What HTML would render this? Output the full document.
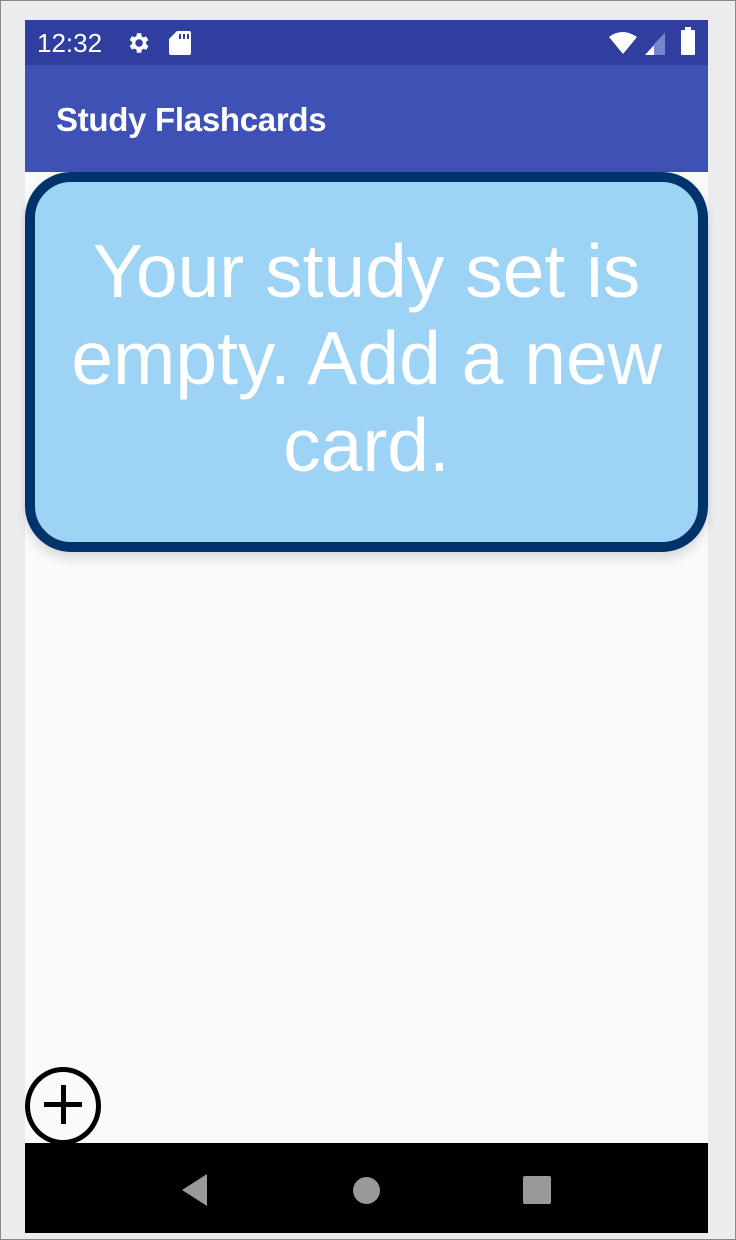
<!DOCTYPE html>
<html><head><style>
body{margin:0;width:736px;height:1240px;background:#ececee;position:relative;overflow:hidden;font-family:"Liberation Sans",sans-serif}
.frame{position:absolute;left:0;top:0;width:734px;height:1238px;border:1px solid #888}
.screen{position:absolute;left:25px;top:20px;width:683px;height:1213px;background:#fafafa}
.status{position:absolute;left:0;top:0;width:683px;height:45px;background:#303f9f;color:#fff}
.app{position:absolute;left:0;top:45px;width:683px;height:107px;background:#3f51b5;color:#fff}
.card{position:absolute;left:0;top:152px;width:663px;height:360px;border:10px solid #00336a;border-radius:46px;background:#9dd3f4;box-shadow:0 8px 10px rgba(0,0,0,.10),0 0 6px rgba(0,0,0,.06);color:#fff;font-size:75px;text-align:center;line-height:87px;box-sizing:content-box;white-space:nowrap}
.nav{position:absolute;left:0;top:1123px;width:683px;height:90px;background:#000}
</style></head><body>
<div class="frame"></div>
<div class="screen">
 <div class="status">
  <div style="position:absolute;left:12px;top:8px;font-size:26px">12:32</div>
  <svg style="position:absolute;left:100px;top:10px" width="26" height="26" viewBox="0 0 24 24"><path fill="#fff" d="M19.4 13a7.5 7.5 0 0 0 0-2l2.1-1.6-2-3.5-2.5 1a7 7 0 0 0-1.7-1L15 3h-4l-.4 2.7a7 7 0 0 0-1.7 1l-2.5-1-2 3.5L6.6 11a7.5 7.5 0 0 0 0 2l-2.2 1.6 2 3.5 2.5-1a7 7 0 0 0 1.7 1L11 21h4l.4-2.7a7 7 0 0 0 1.7-1l2.5 1 2-3.5zM13 15.5a3.5 3.5 0 1 1 0-7 3.5 3.5 0 0 1 0 7z"/></svg>
  <svg style="position:absolute;left:144px;top:11px" width="22" height="24" viewBox="0 0 22 24"><path fill="#fff" d="M8 0h12a2 2 0 0 1 2 2v20a2 2 0 0 1-2 2H2a2 2 0 0 1-2-2V8z"/><rect x="10" y="3" width="2" height="5" fill="#303f9f"/><rect x="14" y="3" width="2" height="5" fill="#303f9f"/><rect x="18" y="3" width="2" height="5" fill="#303f9f"/></svg>
  <svg style="position:absolute;left:584px;top:11px" width="30" height="24" viewBox="0 0 30 24"><path fill="#fff" d="M0 6Q13-4 28 6L14 23z"/></svg>
  <svg style="position:absolute;left:620px;top:13px" width="20" height="22" viewBox="0 0 20 22"><path fill="#fff" d="M20 0v22H0z"/><path fill="#7986cb" d="M20 0v22H9V11z"/></svg>
  <div style="position:absolute;left:656px;top:10px;width:14px;height:25px;background:#fff;border-radius:1px"></div><div style="position:absolute;left:660px;top:7px;width:6px;height:4px;background:#fff"></div>
 </div>
 <div class="app"><div style="position:absolute;left:31px;top:36px;font-size:33px;font-weight:bold;letter-spacing:-0.3px">Study Flashcards</div></div>
 <div class="card"><div style="padding-top:46px">Your study set is<br>empty. Add a new<br>card.</div></div>
 <div style="position:absolute;left:0;top:1047px;width:66px;height:68px;border:5px solid #000;border-radius:50%"></div>
 <div style="position:absolute;left:19px;top:1082px;width:38px;height:5px;background:#000"></div>
 <div style="position:absolute;left:36px;top:1065px;width:5px;height:39px;background:#000"></div>
 <div class="nav">
  <svg style="position:absolute;left:155px;top:31px" width="28" height="32"><path fill="#999" d="M27 0v32L2 16z"/></svg>
  <div style="position:absolute;left:328px;top:34px;width:27px;height:27px;border-radius:50%;background:#999"></div>
  <div style="position:absolute;left:498px;top:33px;width:28px;height:28px;border-radius:2px;background:#999"></div>
 </div>
</div>
</body></html>
